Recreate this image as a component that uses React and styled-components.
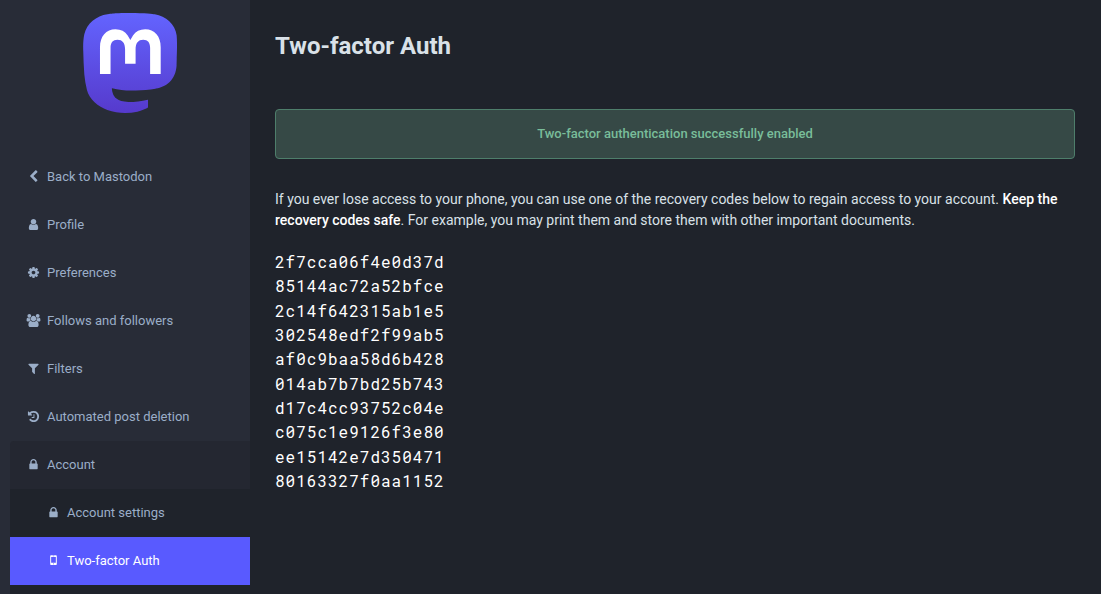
import React from "react";
import styled, { createGlobalStyle } from "styled-components";

const GlobalStyle = createGlobalStyle`
  *, *::before, *::after { box-sizing: border-box; }
  body {
    margin: 0;
    background: #1f232b;
    color: #ffffff;
    font-family: Roboto, "Liberation Sans", sans-serif;
    font-size: 13px;
    line-height: 18px;
  }
`;

const Page = styled.div`
  display: flex;
  min-height: 100vh;
`;

const Sidebar = styled.aside`
  flex: 0 0 250px;
  padding-left: 10px;
  background: #282c37;
`;

const Clip = styled.div`
  height: 100vh;
  overflow: hidden;
`;

const LogoLink = styled.a`
  display: block;
  padding: 13px 0 40px;

  svg {
    display: block;
    width: 94px;
    height: 100px;
    margin: 0 auto;
  }
`;

const Menu = styled.ul`
  margin: 0;
  padding: 0;
  list-style: none;
`;

const SubMenu = styled(Menu)`
  background: #1f232b;
  padding-bottom: 48px;
`;

const MenuLink = styled.a`
  display: flex;
  align-items: center;
  gap: 5px;
  height: 48px;
  padding-left: ${(p) => (p.$nested ? 35 : 15)}px;
  border-radius: ${(p) => (p.$open ? "4px 0 0 0" : "0")};
  background: ${(p) => (p.$active ? "#595aff" : p.$open ? "#242731" : "transparent")};
  color: ${(p) => (p.$active ? "#ffffff" : "#9baec8")};
  text-decoration: none;
`;

const IconBox = styled.svg`
  flex: none;
  width: 17px;
  height: 14px;
  padding-bottom: 1px;
  fill: currentColor;
`;

const Main = styled.main`
  flex: 1;
  min-width: 0;
  max-width: 850px;
  padding: 28px 25px;
`;

const Title = styled.h2`
  margin: 0 0 45px;
  color: #d9e1e8;
  font-size: 24px;
  font-weight: 700;
  line-height: 36px;
`;

const Notice = styled.div`
  margin-bottom: 30px;
  padding: 15px;
  border: 1px solid #4e7e6b;
  border-radius: 4px;
  background: #364946;
  color: #79bd9a;
  font-weight: 500;
  text-align: center;
`;

const Hint = styled.p`
  margin: 0 0 19px;
  color: #d9e1e8;
  font-size: 14px;
  line-height: 21px;

  strong {
    color: #ffffff;
    font-weight: 500;
  }
`;

const Codes = styled.ol`
  display: grid;
  align-content: space-between;
  min-height: 243px;
  margin: 0;
  padding: 0;
  list-style: none;
`;

const Code = styled.li`
  font-family: "Roboto Mono", "DejaVu Sans Mono", monospace;
  font-size: 16px;
  line-height: 24px;
  letter-spacing: 1px;

  samp {
    font: inherit;
  }
`;

const paths = {
  back: "M1427 301l-531 531 531 531q19 19 19 45t-19 45l-166 166q-19 19-45 19t-45-19l-742-742q-19-19-19-45t19-45l742-742q19-19 45-19t45 19l166 166q19 19 19 45t-19 45z",
  user: "M1536 1399q0 109-62.5 187t-150.5 78h-854q-88 0-150.5-78t-62.5-187q0-85 8.5-160.5t31.5-152 58.5-131 94-89 134.5-34.5q131 128 313 128t313-128q76 0 134.5 34.5t94 89 58.5 131 31.5 152 8.5 160.5zm-256-887q0 159-112.5 271.5t-271.5 112.5-271.5-112.5-112.5-271.5 112.5-271.5 271.5-112.5 271.5 112.5 112.5 271.5z",
  cog: "M1152 896q0-106-75-181t-181-75-181 75-75 181 75 181 181 75 181-75 75-181zm512-109v222q0 12-8 23t-20 13l-185 28q-19 54-39 91 35 50 107 138 10 12 10 25t-9 23q-27 37-99 108t-94 71q-12 0-26-9l-138-108q-44 23-91 38-16 136-29 186-7 28-36 28h-222q-14 0-24.5-8.5t-11.5-21.5l-28-184q-49-16-90-37l-141 107q-10 9-25 9-14 0-25-11-126-114-165-168-7-10-7-23 0-12 8-23 15-21 51-66.5t54-70.5q-27-50-41-99l-183-27q-13-2-21-12.5t-8-23.5v-222q0-12 8-23t19-13l186-28q14-46 39-92-40-57-107-138-10-12-10-24 0-10 9-23 26-36 98.5-107.5t94.5-71.5q13 0 26 10l138 107q44-23 91-38 16-136 29-186 7-28 36-28h222q14 0 24.5 8.5t11.5 21.5l28 184q49 16 90 37l142-107q9-9 24-9 13 0 25 10 129 119 165 170 7 8 7 22 0 12-8 23-15 21-51 66.5t-54 70.5q26 50 41 98l183 28q13 2 21 12.5t8 23.5z",
  users: "M657 896q-162 5-265 128h-134q-82 0-138-40.5t-56-118.5q0-353 124-353 6 0 43.5 21t97.5 42.5 119 21.5q67 0 133-23-5 37-5 66 0 139 81 256zm1071 637q0 120-73 189.5t-194 69.5h-874q-121 0-194-69.5t-73-189.5q0-53 3.5-103.5t14-109 26.5-108.5 43-97.5 62-81 85.5-53.5 111.5-20q10 0 43 21.5t73 48 107 48 135 21.5 135-21.5 107-48 73-48 43-21.5q61 0 111.5 20t85.5 53.5 62 81 43 97.5 26.5 108.5 14 109 3.5 103.5zm-1024-1277q0 106-75 181t-181 75-181-75-75-181 75-181 181-75 181 75 75 181zm704 384q0 159-112.5 271.5t-271.5 112.5-271.5-112.5-112.5-271.5 112.5-271.5 271.5-112.5 271.5 112.5 112.5 271.5zm576 225q0 78-56 118.5t-138 40.5h-134q-103-123-265-128 81-117 81-256 0-29-5-66 66 23 133 23 59 0 119-21.5t97.5-42.5 43.5-21q124 0 124 353zm-128-609q0 106-75 181t-181 75-181-75-75-181 75-181 181-75 181 75 75 181z",
  filter: "M1595 295q17 41-14 70l-493 493v742q0 42-39 59-13 5-25 5-27 0-45-19l-256-256q-19-19-19-45v-486l-493-493q-31-29-14-70 17-39 59-39h1280q42 0 59 39z",
  history: "M1664 896q0 156-61 298t-164 245-245 164-298 61q-172 0-327-72.5t-264-204.5q-7-10-6.5-22.5t8.5-20.5l137-138q10-9 25-9 16 2 23 12 73 95 179 147t225 52q104 0 198.5-40.5t163.5-109.5 109.5-163.5 40.5-198.5-40.5-198.5-109.5-163.5-163.5-109.5-198.5-40.5q-98 0-188 35.5t-160 101.5l137 138q31 30 14 69-17 40-59 40h-448q-26 0-45-19t-19-45v-448q0-42 40-59 39-17 69 14l130 129q107-101 244.5-156.5t284.5-55.5q156 0 298 61t245 164 164 245 61 298zm-640-288v448q0 14-9 23t-23 9h-320q-14 0-23-9t-9-23v-64q0-14 9-23t23-9h224v-352q0-14 9-23t23-9h64q14 0 23 9t9 23z",
  lock: "M640 768h512v-192q0-106-75-181t-181-75-181 75-75 181v192zm832 96v576q0 40-28 68t-68 28h-960q-40 0-68-28t-28-68v-576q0-40 28-68t68-28h32v-192q0-184 132-316t316-132 316 132 132 316v192h32q40 0 68 28t28 68z",
  mobile: "M552 160h688q110 0 110 110v1136q0 110-110 110h-688q-110 0-110-110v-1136q0-110 110-110zm20 260v800h648v-800zM830 1300v120h132v-120zM790 235v70h212v-70z",
};

function Icon({ name }) {
  return (
    <IconBox viewBox={name === "users" ? "0 0 2048 1792" : "0 0 1792 1792"} aria-hidden="true">
      <path d={paths[name]} fillRule={name === "mobile" ? "evenodd" : "nonzero"} />
    </IconBox>
  );
}

function Logo() {
  return (
    <svg viewBox="0 0 74 79" role="img" aria-label="Mastodon">
      <defs>
        <linearGradient id="logo-fill" x1="0" y1="0" x2="0" y2="1">
          <stop stopColor="#6364ff" />
          <stop offset="1" stopColor="#563acc" />
        </linearGradient>
      </defs>
      <path
        fill="url(#logo-fill)"
        d="M73.8393 17.4898C72.6973 9.00165 65.2994 2.31235 56.5296 1.01614C55.05 0.797115 49.4441 0 36.4582 0H36.3612C23.3717 0 20.585 0.797115 19.1054 1.01614C10.5798 2.27644 2.79399 8.28712 0.904997 16.8758C-0.00358524 21.1056 -0.100549 25.7949 0.0682394 30.0965C0.308852 36.2651 0.355538 42.423 0.91577 48.5665C1.30307 52.6474 1.97872 56.6957 2.93763 60.6812C4.73325 68.042 12.0019 74.1676 19.1233 76.6666C26.7478 79.2728 34.9474 79.7055 42.8039 77.9162C43.6682 77.7151 44.5217 77.4817 45.3645 77.216C47.275 76.6092 49.5123 75.9305 51.1571 74.7385L51.2325 74.5948V68.6416L51.0171 68.4729C45.9835 69.675 40.8254 70.2777 35.6502 70.2682C26.7439 70.2682 24.3486 66.042 23.6626 64.2826C23.1113 62.762 22.7612 61.1759 22.6212 59.5646L22.8367 59.3886C27.7864 60.5826 32.8604 61.1853 37.9522 61.1839C39.1768 61.1839 40.3978 61.1839 41.6224 61.1516C46.7435 61.008 52.1411 60.7459 57.1796 59.7621C57.3053 59.7369 57.431 59.7154 57.5387 59.6831C65.4861 58.157 73.0493 53.3672 73.8178 41.2381C73.8465 40.7606 73.9184 36.2364 73.9184 35.7409C73.9219 34.0569 74.4606 23.7949 73.8393 17.4898Z"
      />
      <path
        fill="#fff"
        d="M61.2484 27.0263V48.114H52.8916V27.6475C52.8916 23.3388 51.096 21.1413 47.4437 21.1413C43.4287 21.1413 41.4177 23.7409 41.4177 28.8755V40.0782H33.1111V28.8755C33.1111 23.7409 31.0965 21.1413 27.0815 21.1413C23.4507 21.1413 21.6371 23.3388 21.6371 27.6475V48.114H13.2839V27.0263C13.2839 22.7176 14.384 19.2946 16.5843 16.7572C18.8539 14.2258 21.8311 12.926 25.5264 12.926C29.8036 12.926 33.0357 14.5705 35.1905 17.8559L37.2698 21.346L39.3527 17.8559C41.5074 14.5705 44.7395 12.926 49.0095 12.926C52.7013 12.926 55.6784 14.2258 57.9553 16.7572C60.1531 19.2922 61.2508 22.7152 61.2484 27.0263Z"
      />
    </svg>
  );
}

const links = [
  ["back", "Back to Mastodon"],
  ["user", "Profile"],
  ["cog", "Preferences"],
  ["users", "Follows and followers"],
  ["filter", "Filters"],
  ["history", "Automated post deletion"],
];

const codes = [
  "2f7cca06f4e0d37d",
  "85144ac72a52bfce",
  "2c14f642315ab1e5",
  "302548edf2f99ab5",
  "af0c9baa58d6b428",
  "014ab7b7bd25b743",
  "d17c4cc93752c04e",
  "c075c1e9126f3e80",
  "ee15142e7d350471",
  "80163327f0aa1152",
];

export default function App() {
  return (
    <Page>
      <GlobalStyle />
      <Sidebar>
        <Clip>
          <LogoLink href="#">
            <Logo />
          </LogoLink>
          <nav>
            <Menu>
              {links.map(([icon, label]) => (
                <li key={icon}>
                  <MenuLink href="#">
                    <Icon name={icon} />
                    {label}
                  </MenuLink>
                </li>
              ))}
              <li>
                <MenuLink href="#" $open>
                  <Icon name="lock" />
                  Account
                </MenuLink>
                <SubMenu>
                  <li>
                    <MenuLink href="#" $nested>
                      <Icon name="lock" />
                      Account settings
                    </MenuLink>
                  </li>
                  <li>
                    <MenuLink href="#" $nested $active aria-current="page">
                      <Icon name="mobile" />
                      Two-factor Auth
                    </MenuLink>
                  </li>
                </SubMenu>
              </li>
            </Menu>
          </nav>
        </Clip>
      </Sidebar>
      <Main>
        <Title>Two-factor Auth</Title>
        <Notice role="status">Two-factor authentication successfully enabled</Notice>
        <Hint>
          If you ever lose access to your phone, you can use one of the recovery codes below to
          regain access to your account. <strong>Keep the recovery codes safe</strong>. For
          example, you may print them and store them with other important documents.
        </Hint>
        <Codes>
          {codes.map((code) => (
            <Code key={code}>
              <samp>{code}</samp>
            </Code>
          ))}
        </Codes>
      </Main>
    </Page>
  );
}
